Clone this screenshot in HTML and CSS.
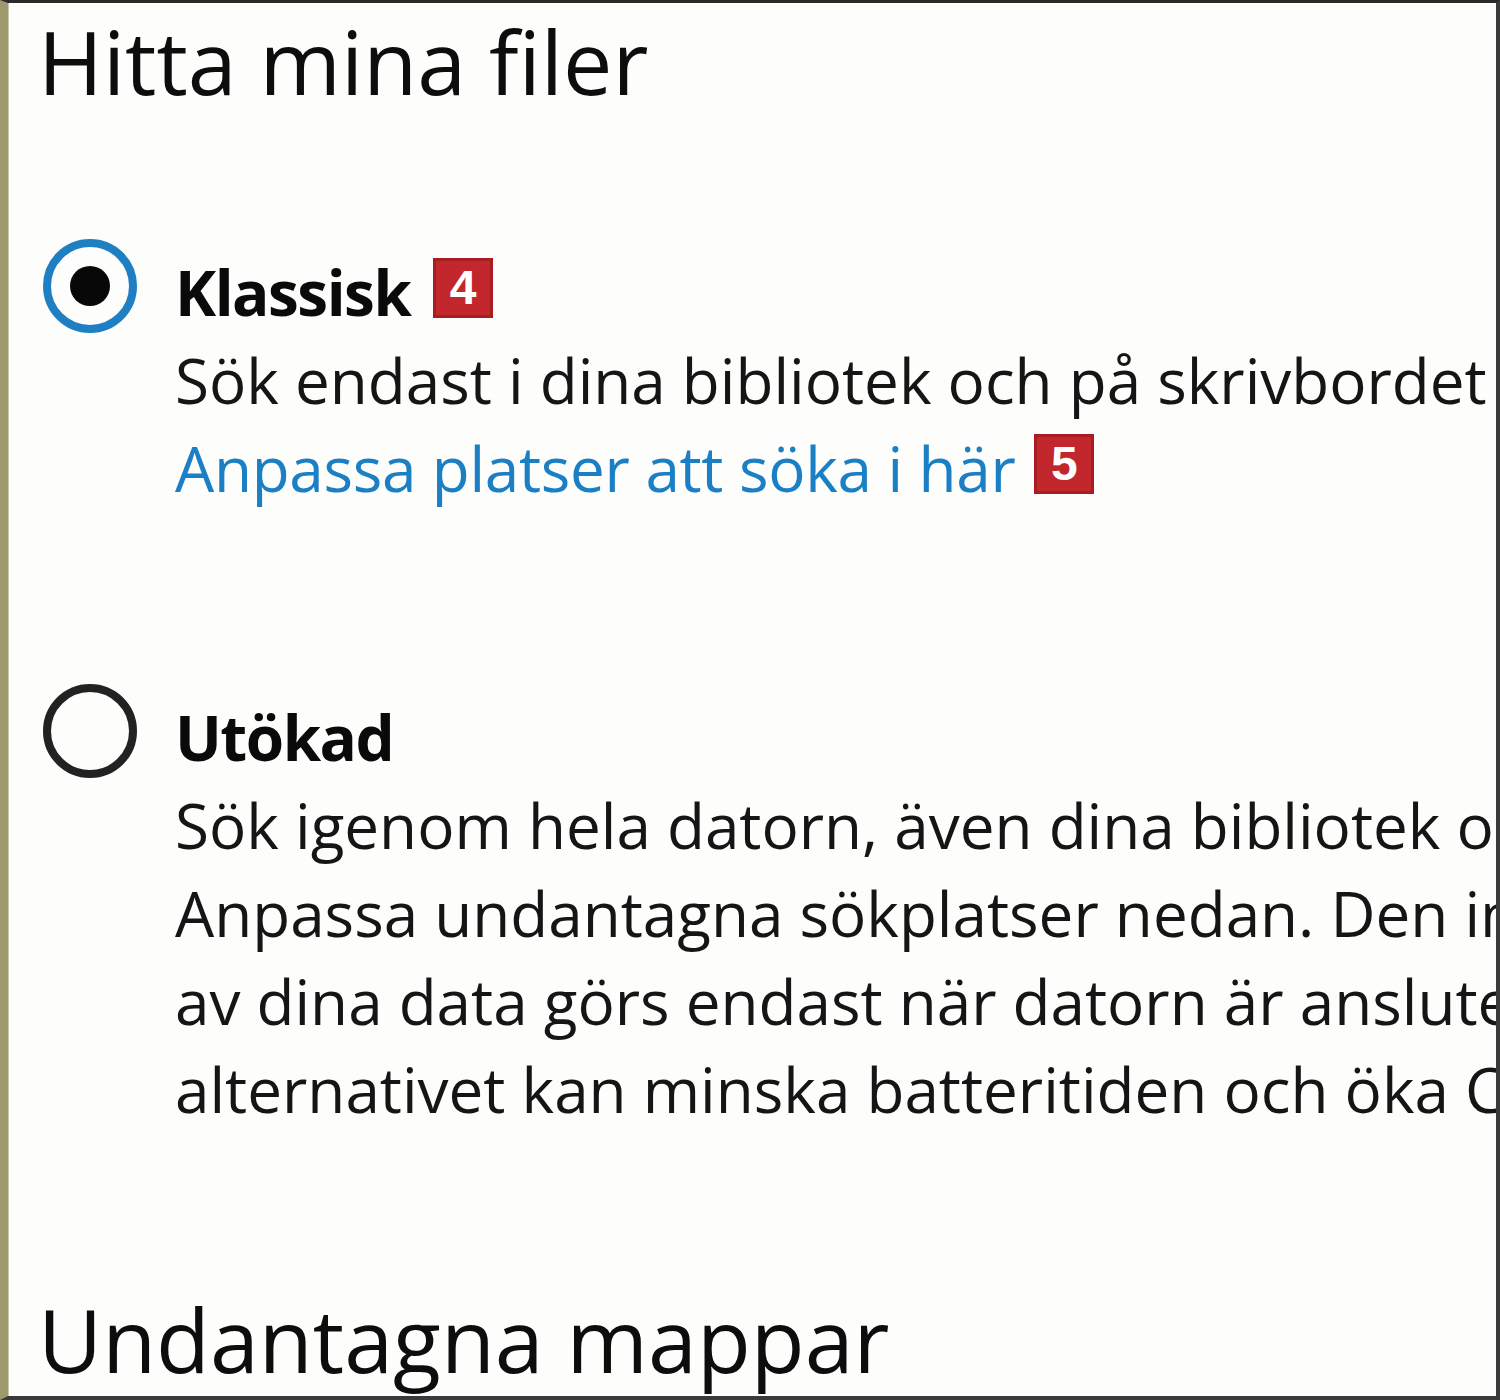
FILE: index.html
```html
<!DOCTYPE html>
<html lang="sv">
<head>
    <meta charset="UTF-8">
    <title>Hitta mina filer</title>
    <link rel="stylesheet" href="styles.css">
</head>
<body>
    <div class="pane">
        <h1 class="section-title">Hitta mina filer</h1>

        <div class="options">
            <div class="option">
                <span class="radio checked"></span>
                <div class="option-body">
                    <div class="option-title">Klassisk <span class="badge">4</span></div>
                    <div class="option-line">Sök endast i dina bibliotek och på skrivbordet</div>
                    <a href="#" class="option-link">Anpassa platser att söka i här <span class="badge">5</span></a>
                </div>
            </div>

            <div class="option">
                <span class="radio"></span>
                <div class="option-body">
                    <div class="option-title">Utökad</div>
                    <div class="option-line">Sök igenom hela datorn, även dina bibliotek och skrivbordet.</div>
                    <div class="option-line">Anpassa undantagna sökplatser nedan. Den inledande indexeringen</div>
                    <div class="option-line">av dina data görs endast när datorn är ansluten till ström. Det här</div>
                    <div class="option-line">alternativet kan minska batteritiden och öka CPU-användningen.</div>
                </div>
            </div>
        </div>

        <h2 class="section-title">Undantagna mappar</h2>
    </div>
</body>
</html>
```

FILE: styles.css
```css
* {
    margin: 0;
    padding: 0;
    box-sizing: border-box;
}

body {
    font-family: 'Open Sans', 'Noto Sans', sans-serif;
    background: #fdfdfb;
    color: #111;
}

.pane {
    height: 1400px;
    overflow: hidden;
    background: #fdfdfb;
    border-top: 3px solid #2a2a2a;
    border-right: 4px solid #3a3a3a;
    border-bottom: 4px solid #3a3a3a;
    border-left: 8px solid #9e9a6e;
    box-shadow: inset 1px 0 0 #c9c7b0;
    padding: 8px 0 0 30px;
}

.section-title {
    font-size: 88px;
    font-weight: 400;
    line-height: 100px;
    color: #0d0d0d;
    white-space: nowrap;
}

.options {
    margin-top: 137px;
}

.option {
    display: flex;
    margin-bottom: 181px;
}

.option:last-child {
    margin-bottom: 156px;
}

.radio {
    flex: none;
    width: 94px;
    height: 94px;
    margin: -9px 38px 0 5px;
    border: 8px solid #222;
    border-radius: 50%;
    display: flex;
    align-items: center;
    justify-content: center;
}

.radio.checked {
    border-color: #1e7fc3;
}

.radio.checked::after {
    content: "";
    width: 40px;
    height: 40px;
    border-radius: 50%;
    background: #080808;
}

.option-body {
    font-size: 62px;
    line-height: 88px;
    white-space: nowrap;
}

.option-title {
    font-weight: 700;
    letter-spacing: -1.5px;
    color: #0a0a0a;
}

.option-title .badge {
    margin-left: 8px;
}

.option-line {
    color: #151515;
}

.option-link {
    color: #1a7fc4;
    text-decoration: none;
    letter-spacing: -0.3px;
}

.option-link .badge {
    margin-left: 3px;
}

.badge {
    display: inline-block;
    width: 60px;
    height: 60px;
    background: #c1272d;
    border: 3px solid #a81c22;
    color: #fff;
    font-family: 'Liberation Sans', Arial, sans-serif;
    font-weight: 700;
    font-size: 48px;
    line-height: 54px;
    letter-spacing: 0;
    text-align: center;
    vertical-align: 12px;
}
```
